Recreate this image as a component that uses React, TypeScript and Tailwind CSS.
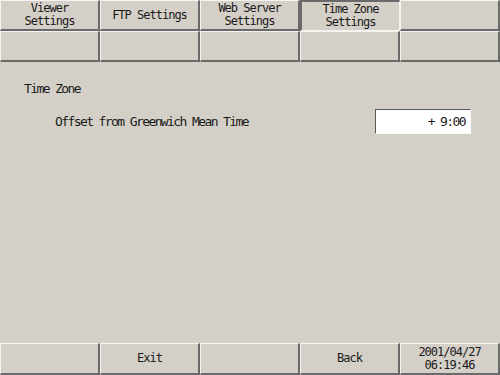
const raised =
  "border-t border-l border-t-[#f6f4f0] border-l-[#f6f4f0] border-r-2 border-b-2 border-r-[#6a6a6a] border-b-[#6a6a6a]";
const sunken =
  "border-t-2 border-l-2 border-t-[#6a6a6a] border-l-[#6a6a6a] border-r border-b border-r-[#f6f4f0] border-b-[#f6f4f0]";

const font = {
  fontFamily: '"DejaVu Sans Mono", "Liberation Mono", monospace',
};

function Cell({ lines, active }: { lines: string[]; active?: boolean }) {
  return (
    <div
      className={`flex flex-col items-center justify-center leading-[13px] text-[12px] tracking-[-1px] text-[#1a1a1a] ${
        active ? sunken : raised
      }`}
    >
      {lines.map((l) => (
        <span key={l}>{l}</span>
      ))}
    </div>
  );
}

export default function App() {
  const tabs = [
    ["Viewer", "Settings"],
    ["FTP Settings"],
    ["Web Server", "Settings"],
    ["Time Zone", "Settings"],
    [],
  ];
  const bottom = [[], ["Exit"], [], ["Back"], ["2001/04/27", "06:19:46"]];
  return (
    <div
      className="w-[500px] h-[375px] flex flex-col bg-[#d4d0c8] overflow-hidden"
      style={font}
    >
      <div className="grid grid-cols-5 h-[31px]">
        {tabs.map((t, i) => (
          <Cell key={i} lines={t} active={i === 3} />
        ))}
      </div>
      <div className="grid grid-cols-5 h-[31px]">
        {[0, 1, 2, 3, 4].map((i) => (
          <Cell key={i} lines={[]} />
        ))}
      </div>
      <div className="flex-1 flex flex-col text-[13px] tracking-[-1.6px] text-[#1a1a1a]">
        <div className="pl-[24px] pt-[20px] leading-[14px]">Time Zone</div>
        <div className="flex items-center pl-[55px] pr-[29px] mt-[13px]">
          <span className="flex-1 leading-[14px]">
            Offset from Greenwich Mean Time
          </span>
          <div className="w-[96px] h-[25px] bg-white border-t border-l border-t-[#5a5a5a] border-l-[#5a5a5a] border-r border-b border-r-[#fafafa] border-b-[#fafafa] flex items-center justify-end pr-[5px]">
            + 9:00
          </div>
        </div>
      </div>
      <div className="grid grid-cols-5 h-[32px]">
        {bottom.map((t, i) => (
          <Cell key={i} lines={t} />
        ))}
      </div>
    </div>
  );
}
